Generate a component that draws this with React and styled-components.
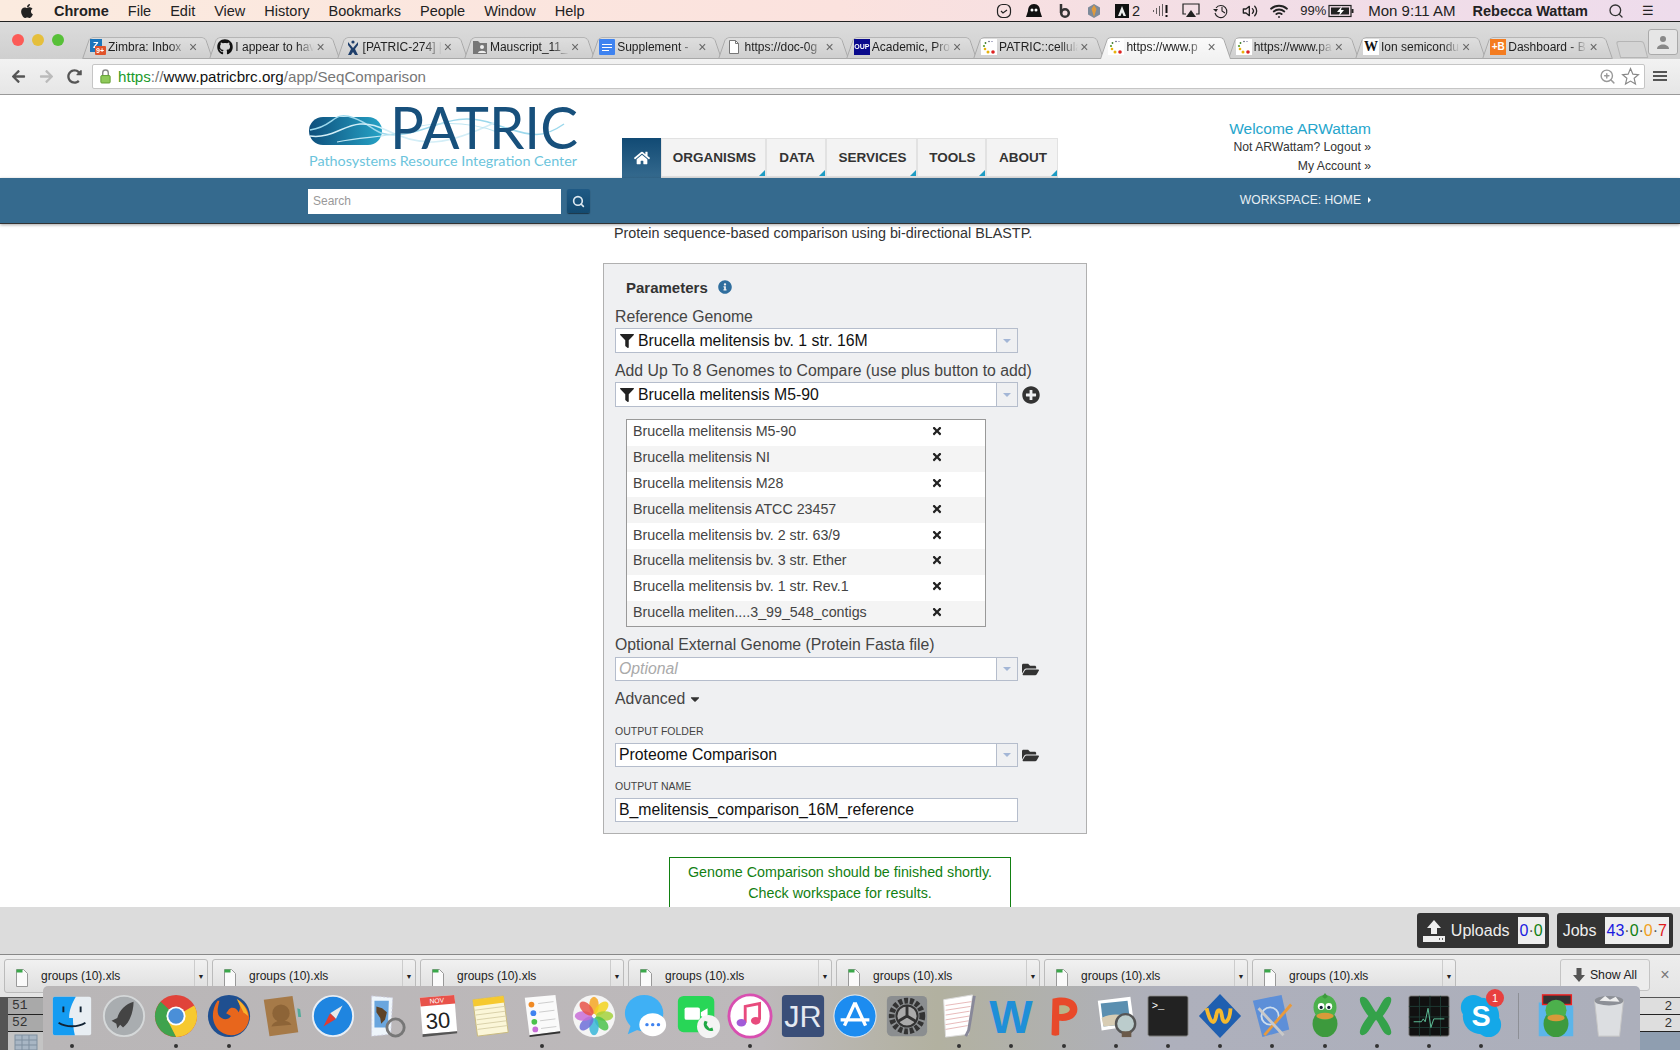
import React from "react";
import styled, { createGlobalStyle } from "styled-components";
import {
  FaApple,
  FaArrowLeft,
  FaArrowRight,
  FaCaretDown,
  FaFilter,
  FaFolderOpen,
  FaGithub,
  FaHome,
  FaInfoCircle,
  FaPlusCircle,
  FaRedoAlt,
  FaTimes,
} from "react-icons/fa";
import { FiSearch, FiVolume2, FiWifi, FiZoomIn } from "react-icons/fi";

const GlobalStyle = createGlobalStyle`
  html, body {
    margin: 0;
    padding: 0;
    background: #fff;
  }
  body {
    font-family: "Liberation Sans", Arial, sans-serif;
    color: #333;
  }
`;

const Screen = styled.div`
  position: relative;
  width: 1680px;
  height: 1050px;
  overflow: hidden;
  display: flex;
  flex-direction: column;
`;

/* mac menu bar */
const MenuBar = styled.div`
  height: 22px;
  flex: none;
  box-sizing: border-box;
  display: flex;
  align-items: center;
  padding: 0 26px 0 19px;
  font-size: 14.5px;
  color: #222;
  background: linear-gradient(90deg, #fbebdf 0%, #fbe2de 50%, #f2dde6 75%, #eedcec 100%);
  border-bottom: 1px solid #222;
`;
const MenuLeft = styled.div`
  display: flex;
  align-items: center;
  gap: 19px;
`;
const MenuRight = styled.div`
  margin-left: auto;
  display: flex;
  align-items: center;
  gap: 12px;
  font-size: 14.5px;
`;
const MenuBold = styled.span`
  font-weight: 700;
  margin-left: ${(p) => p.$ml || 0}px;
  margin-right: ${(p) => p.$mr || 0}px;
`;
const MenuSmall = styled.span`
  font-size: 13px;
  margin-left: ${(p) => p.$ml || 0}px;
`;
const MenuClock = styled.span`
  font-size: 15px;
`;
const MenuAdobe = styled.span`
  display: flex;
  align-items: center;
  gap: 3px;
`;
const BatteryWrap = styled.span`
  display: flex;
  margin: 0 2px 0 -10px;
`;

/* chrome tabs */
const TabStrip = styled.div`
  height: 37px;
  flex: none;
  display: flex;
  align-items: flex-end;
  padding-left: 84px;
  position: relative;
  background: linear-gradient(#dcdcdc, #cfcfcf);
`;
const Lights = styled.div`
  position: absolute;
  left: 12px;
  top: 12px;
  display: flex;
  gap: 8px;
`;
const Light = styled.span`
  width: 12px;
  height: 12px;
  border-radius: 50%;
  background: ${(p) => p.$color};
`;
const Tab = styled.div`
  position: relative;
  width: 127.3px;
  height: 25px;
  flex: none;
  display: flex;
  align-items: center;
  padding: 0 14px 0 6px;
  box-sizing: border-box;
  gap: 2px;
  font-size: 12px;
  color: #222;
  z-index: ${(p) => (p.$active ? 2 : 1)};
  &::before {
    content: "";
    position: absolute;
    inset: 0 -2px 0 -2px;
    border: 1px solid #a9a9a9;
    border-bottom: ${(p) => (p.$active ? "none" : "1px solid #a9a9a9")};
    border-radius: 4px 4px 0 0;
    background: ${(p) => (p.$active ? "linear-gradient(#fafafa, #f2f2f2)" : "linear-gradient(#dedede, #cfcfcf)")};
    transform: perspective(40px) rotateX(12deg);
    transform-origin: bottom;
  }
  & > * {
    position: relative;
  }
`;
const TabTitle = styled.span`
  flex: 1;
  overflow: hidden;
  white-space: nowrap;
  -webkit-mask-image: linear-gradient(90deg, #000 78%, transparent);
`;
const TabClose = styled.span`
  color: #666;
  font-size: 14px;
  line-height: 1;
`;
const NewTab = styled.div`
  width: 26px;
  height: 15px;
  margin-left: 6px;
  margin-bottom: 1px;
  flex: none;
  background: #d4d4d4;
  border: 1px solid #b5b5b5;
  border-radius: 3px 3px 0 0;
  transform: skewX(15deg);
`;
const Profile = styled.div`
  position: absolute;
  right: 2px;
  top: 7px;
  width: 30px;
  height: 26px;
  box-sizing: border-box;
  background: #e6e6e6;
  border: 1px solid #aaa;
  border-radius: 3px;
  display: flex;
  align-items: center;
  justify-content: center;
  color: #888;
`;
const Favicon = styled.span`
  width: 16px;
  height: 16px;
  flex: none;
  display: flex;
  align-items: center;
  justify-content: center;
  font-size: ${(p) => p.$size || 9}px;
  font-weight: 700;
  line-height: 1;
  color: ${(p) => p.$color || "#fff"};
  background: ${(p) => p.$bg || "transparent"};
  font-family: ${(p) => (p.$serif ? '"Liberation Serif", serif' : "inherit")};
`;

/* chrome toolbar */
const Toolbar = styled.div`
  height: 36px;
  flex: none;
  box-sizing: border-box;
  display: flex;
  align-items: center;
  padding: 0 7px 1px 4px;
  background: linear-gradient(#f2f2f2, #e6e6e6);
  border-bottom: 1px solid #999;
  position: relative;
`;
const NavBtn = styled.span`
  width: 28px;
  display: flex;
  justify-content: center;
  font-size: ${(p) => p.$size || 15}px;
  color: ${(p) => p.$color};
`;
const UrlBar = styled.div`
  width: 1553px;
  height: 25px;
  margin-left: 4px;
  box-sizing: border-box;
  display: flex;
  align-items: center;
  gap: 6px;
  padding: 1px 4px 0 6px;
  background: #fff;
  border: 1px solid #c5c5c5;
  border-radius: 2px;
  font-size: 15.15px;
  color: #777;
`;
const UrlGreen = styled.span`
  color: #1c9a2b;
`;
const UrlDark = styled.span`
  color: #111;
`;
const UrlTools = styled.span`
  margin-left: auto;
  display: flex;
  align-items: center;
  gap: 5px;
  color: #999;
  font-size: 17px;
`;
const HamburgerBox = styled.div`
  width: 14px;
  margin-left: 8px;
  display: flex;
  flex-direction: column;
  gap: 2px;
`;
const HamburgerLine = styled.span`
  height: 2px;
  background: #555;
`;

/* site header */
const SiteHeader = styled.div`
  height: 83px;
  flex: none;
  display: flex;
  padding: 0 309px 0 307px;
  background: #fff;
`;
const LogoBox = styled.svg`
  width: 272px;
  height: 70px;
  margin-top: 9px;
  flex: none;
`;
const Nav = styled.div`
  display: flex;
  align-self: flex-end;
  margin-left: 43px;
  height: 40px;
`;
const HomeItem = styled.div`
  width: 39px;
  display: flex;
  align-items: center;
  justify-content: center;
  color: #fff;
  font-size: 16px;
  background: linear-gradient(#114a74, #356a8e);
`;
const NavItem = styled.div`
  position: relative;
  width: ${(p) => p.$w}px;
  box-sizing: border-box;
  padding-left: 2px;
  display: flex;
  align-items: center;
  justify-content: center;
  font-size: 13.5px;
  font-weight: 700;
  color: #333;
  background: #f3f3f3;
  border: 1px solid #e2e2e2;
  border-bottom-width: 2px;
  &::after {
    content: "";
    position: absolute;
    right: 0;
    bottom: 0;
    border-style: solid;
    border-width: 0 0 6px 6px;
    border-color: transparent transparent #1d9cc4 transparent;
  }
`;
const UserBox = styled.div`
  margin-left: auto;
  padding-top: 24px;
  text-align: right;
  font-size: 12.2px;
  color: #333;
`;
const Welcome = styled.div`
  font-size: 15.5px;
  line-height: 19px;
  color: #26a5cc;
`;
const UserLink = styled.div`
  line-height: 19px;
`;

const BlueBar = styled.div`
  height: 46px;
  flex: none;
  box-sizing: border-box;
  display: flex;
  align-items: center;
  padding: 1px 309px 0 308px;
  background: #356a8e;
  border-bottom: 1px solid #333;
  box-shadow: 0 1px 3px rgba(0, 0, 0, 0.35);
  position: relative;
  z-index: 2;
`;
const SearchInput = styled.div`
  width: 253px;
  height: 25px;
  box-sizing: border-box;
  padding: 0 5px;
  display: flex;
  align-items: center;
  background: #fff;
  color: #999;
  font-size: 12px;
`;
const SearchBtn = styled.div`
  width: 23px;
  height: 24px;
  margin-left: 6px;
  display: flex;
  align-items: center;
  justify-content: center;
  color: #dfeaf2;
  font-size: 13px;
  border-radius: 2px;
  background: linear-gradient(#1f5a85, #134a70);
  box-shadow: 0 1px 1px rgba(0, 0, 0, 0.5);
`;
const WorkspaceLink = styled.div`
  margin-left: auto;
  margin-top: -2px;
  display: flex;
  align-items: center;
  gap: 7px;
  font-size: 12.15px;
  color: #e8eff4;
`;
const SmallCaret = styled.span`
  border-style: solid;
  border-width: 3px 0 3px 3.5px;
  border-color: transparent transparent transparent #fff;
`;

/* page body */
const Main = styled.div`
  height: 683px;
  flex: none;
  overflow: hidden;
  display: flex;
  flex-direction: column;
  background: #fff;
`;
const Description = styled.div`
  margin: 0 0 0 614px;
  font-size: 14.35px;
  line-height: 18px;
  color: #333;
`;
const Panel = styled.div`
  width: 484px;
  height: 571px;
  flex: none;
  box-sizing: border-box;
  margin: 21px 0 0 603px;
  padding: 13px 11px 0;
  background: #eff0f2;
  border: 1px solid #b0b0b0;
  display: flex;
  flex-direction: column;
`;
const PanelHead = styled.div`
  display: flex;
  align-items: center;
  gap: 10px;
  height: 20px;
  padding-left: 11px;
  margin-bottom: 11px;
  font-size: 15px;
  font-weight: 700;
  color: #333;
`;
const InfoIcon = styled(FaInfoCircle)`
  color: #2f6e9e;
  font-size: 14px;
`;
const FieldLabel = styled.div`
  font-size: 15.8px;
  line-height: 18px;
  margin-bottom: ${(p) => p.$mb ?? 2}px;
  color: #444;
`;
const CapsLabel = styled.div`
  font-size: 10.5px;
  line-height: 13px;
  margin-bottom: 5px;
  color: #444;
`;
const FieldRow = styled.div`
  display: flex;
  align-items: center;
  gap: 4px;
  margin-bottom: ${(p) => p.$mb || 0}px;
`;
const Combo = styled.div`
  width: 403px;
  height: ${(p) => p.$h || 24}px;
  box-sizing: border-box;
  flex: none;
  display: flex;
  align-items: stretch;
  background: #fff;
  border: 1px solid #b5bdcc;
`;
const ComboValue = styled.div`
  flex: 1;
  display: flex;
  align-items: center;
  gap: 4px;
  padding-left: 3px;
  font-size: 15.8px;
  color: #111;
  white-space: nowrap;
  overflow: hidden;
`;
const Placeholder = styled.span`
  font-style: italic;
  color: #aaa;
`;
const FilterIcon = styled(FaFilter)`
  font-size: 14px;
  color: #222;
  margin-left: 1px;
`;
const ComboArrow = styled.div`
  width: 20px;
  flex: none;
  display: flex;
  align-items: center;
  justify-content: center;
  background: #eff0f2;
  border-left: 1px solid #b5bdcc;
  &::after {
    content: "";
    border-style: solid;
    border-width: 4px 4px 0 4px;
    border-color: #a3b6d6 transparent transparent transparent;
  }
`;
const GenomeList = styled.div`
  width: 360px;
  box-sizing: border-box;
  margin: 12px 0 9px 11px;
  border: 1px solid #999;
  background: #fff;
`;
const GenomeRow = styled.div`
  height: 25.8px;
  box-sizing: border-box;
  padding: 0 0 3px 6px;
  display: flex;
  align-items: center;
  font-size: 14.25px;
  color: #444;
  background: ${(p) => (p.$odd ? "#f4f4f4" : "#fff")};
`;
const GenomeName = styled.span`
  width: 298px;
  flex: none;
  white-space: nowrap;
`;
const RemoveIcon = styled(FaTimes)`
  font-size: 12px;
  color: #222;
`;
const AdvancedToggle = styled.div`
  display: flex;
  align-items: center;
  gap: 3px;
  height: 20px;
  margin: 8px 0 16px;
  font-size: 15.8px;
  color: #444;
`;
const TextBox = styled.div`
  width: 403px;
  height: 24px;
  box-sizing: border-box;
  display: flex;
  align-items: center;
  padding-left: 3px;
  font-size: 15.8px;
  color: #111;
  background: #fff;
  border: 1px solid #b5bdcc;
`;
const Message = styled.div`
  width: 342px;
  height: 70px;
  flex: none;
  box-sizing: border-box;
  margin: 23px 0 0 669px;
  padding-top: 4px;
  border: 1px solid #128012;
  text-align: center;
  font-size: 14.3px;
  line-height: 21px;
  color: #128012;
  background: #fff;
`;

/* jobs footer */
const Footer = styled.div`
  height: 47px;
  flex: none;
  display: flex;
  align-items: flex-start;
  justify-content: flex-end;
  gap: 8px;
  padding: 6px 7px 0 0;
  box-sizing: border-box;
  background: #dcdcdc;
`;
const StatusPill = styled.div`
  height: 35px;
  box-sizing: border-box;
  display: flex;
  align-items: center;
  gap: 5px;
  padding: 0 4px 0 ${(p) => p.$pl}px;
  border-radius: 3px;
  background: #333;
  color: #eee;
  font-size: 16px;
`;
const Counts = styled.span`
  background: #eee;
  height: 27px;
  display: flex;
  align-items: center;
  padding: 0 2px;
  margin-left: 3px;
  font-size: 16px;
`;
const Count = styled.span`
  color: ${(p) => p.$color};
`;

/* chrome download shelf */
const DownloadBar = styled.div`
  height: 43px;
  flex: none;
  box-sizing: border-box;
  display: flex;
  align-items: flex-start;
  gap: 4px;
  padding: 4px 0 0 4px;
  background: linear-gradient(#ededed, #e4e4e4);
  border-top: 1px solid #888;
`;
const DownloadItem = styled.div`
  width: 204px;
  height: 34px;
  flex: none;
  box-sizing: border-box;
  display: flex;
  align-items: flex-start;
  padding-top: 8px;
  font-size: 12px;
  color: #222;
  background: linear-gradient(#f1f1f1, #dedede);
  border: 1px solid #bbb;
  border-radius: 3px;
`;
const FileIcon = styled.svg`
  width: 16px;
  height: 20px;
  margin: 0 11px 0 9px;
  flex: none;
`;
const DownloadName = styled.span`
  flex: 1;
  line-height: 16px;
`;
const DownloadCaret = styled.span`
  width: 13px;
  height: 32px;
  margin-top: -8px;
  flex: none;
  box-sizing: border-box;
  display: flex;
  align-items: center;
  justify-content: center;
  border-left: 1px solid #ccc;
  font-size: 7px;
`;
const ShowAll = styled.div`
  width: 90px;
  height: 32px;
  margin-left: auto;
  flex: none;
  box-sizing: border-box;
  display: flex;
  align-items: center;
  justify-content: center;
  gap: 5px;
  font-size: 12.3px;
  color: #222;
  background: #ececec;
  border: 1px solid #c4c4c4;
  border-radius: 3px;
`;
const ShelfClose = styled.span`
  width: 30px;
  height: 32px;
  margin-left: -4px;
  flex: none;
  display: flex;
  align-items: center;
  justify-content: center;
  font-size: 16px;
  color: #777;
`;

/* behind the dock */
const DesktopStrip = styled.div`
  height: 53px;
  flex: none;
  box-sizing: border-box;
  padding-top: 1px;
  display: flex;
  justify-content: space-between;
  background: #555;
`;
const SheetPiece = styled.div`
  width: ${(p) => p.$w}px;
  box-sizing: border-box;
  padding-left: ${(p) => p.$pl || 0}px;
  font-size: 13px;
  color: #333;
  overflow: hidden;
`;
const SheetCell = styled.div`
  height: 17px;
  box-sizing: border-box;
  display: flex;
  justify-content: ${(p) => p.$justify || "flex-start"};
  gap: 8px;
  line-height: 16px;
  padding: 0 8px 0 4px;
  font-family: ${(p) => (p.$mono ? '"Liberation Mono", monospace' : "inherit")};
  background: ${(p) => p.$bg};
  border-bottom: 1px solid #222;
`;
const SheetFoot = styled.div`
  height: 18px;
  box-sizing: border-box;
  padding-left: 4px;
  background: ${(p) => p.$bg};
`;

/* dock */
const Dock = styled.div`
  position: absolute;
  left: 43px;
  bottom: 0;
  width: 1597px;
  height: 64px;
  box-sizing: border-box;
  padding: 7px 0 0 6px;
  display: flex;
  align-items: flex-start;
  gap: 6.2px;
  background: linear-gradient(90deg, #b9b6b7 0%, #bdb9bb 45%, #b2b1a0 56%, #aeb0bc 70%, #acafbb 100%);
  border-radius: 5px 5px 0 0;
`;
const DockSlot = styled.div`
  position: relative;
  width: 46px;
  height: 46px;
  flex: none;
  &::after {
    content: "";
    display: ${(p) => (p.$running ? "block" : "none")};
    position: absolute;
    left: 21px;
    bottom: -9px;
    width: 4px;
    height: 4px;
    border-radius: 50%;
    background: #333;
  }
`;
const DockSep = styled.div`
  width: 1px;
  height: 46px;
  margin: 0 8px;
  flex: none;
  background: #8d8f96;
`;
const Badge = styled.span`
  position: absolute;
  top: -4px;
  right: 0;
  width: 18px;
  height: 18px;
  border-radius: 50%;
  background: #e8403f;
  color: #fff;
  font-size: 11px;
  display: flex;
  align-items: center;
  justify-content: center;
`;

const Ico = ({ children }) => (
  <svg viewBox="0 0 48 48" width="46" height="46">
    {children}
  </svg>
);

const Glyph = ({ w = 18, h = 16, vb = "0 0 18 16", children }) => (
  <svg viewBox={vb} width={w} height={h}>
    {children}
  </svg>
);

const PatricDots = () => (
  <svg viewBox="0 0 16 16" width="16" height="16">
    <rect width="16" height="16" fill="#fff" />
    <circle cx="12" cy="13" r="1.8" fill="#d22" />
    <circle cx="7" cy="13" r="1.5" fill="#e8b20c" />
    <circle cx="4" cy="10" r="1.3" fill="#e8b20c" />
    <circle cx="3" cy="7" r="1.1" fill="#5a9a2a" />
    <circle cx="4.5" cy="4" r="0.9" fill="#3d7a2a" />
    <circle cx="8" cy="2.5" r="0.7" fill="#335" />
    <circle cx="11" cy="2.5" r="0.6" fill="#558" />
  </svg>
);

const tabs = [
  {
    title: "Zimbra: Inbox",
    icon: (
      <svg viewBox="0 0 16 16" width="16" height="16">
        <rect width="12" height="13" fill="#1b75bb" />
        <text x="3" y="9" fontSize="9" fontWeight="700" fill="#fff" fontFamily="Liberation Sans">Z</text>
        <rect x="5" y="7" width="11" height="9" rx="1" fill="#e0532a" />
        <text x="6" y="14" fontSize="7" fontWeight="700" fill="#fff" fontFamily="Liberation Sans">9+</text>
      </svg>
    ),
  },
  { title: "I appear to hav", icon: <Favicon $color="#111" $size={16}><FaGithub /></Favicon> },
  {
    title: "[PATRIC-274] |",
    icon: (
      <svg viewBox="0 0 16 16" width="16" height="16">
        <circle cx="8" cy="3" r="1.6" fill="#1f3f6b" />
        <path d="M3 3l5 6 5-6v3l-3 4 3 6h-3l-2-3-2 3H3l3-6-3-4z" fill="#1f3f6b" />
      </svg>
    ),
  },
  {
    title: "Mauscript_11_",
    icon: (
      <svg viewBox="0 0 16 16" width="16" height="16">
        <path d="M1 2h5l2 2h7v11H1z" fill="#777" />
        <circle cx="10" cy="8" r="2" fill="#eee" />
        <path d="M6 14c0-3 8-3 8 0z" fill="#eee" />
      </svg>
    ),
  },
  {
    title: "Supplement -",
    icon: (
      <svg viewBox="0 0 16 16" width="16" height="16">
        <rect width="16" height="16" rx="1" fill="#3f83f0" />
        <path d="M3 5h10v1H3zM3 8h10v1H3zM3 11h7v1H3z" fill="#fff" />
      </svg>
    ),
  },
  {
    title: "https://doc-0g",
    icon: (
      <svg viewBox="0 0 16 16" width="16" height="16">
        <path d="M3.5 1.5h6l3 3v10h-9z" fill="#fff" stroke="#777" />
        <path d="M9.5 1.5v3h3" fill="none" stroke="#777" />
      </svg>
    ),
  },
  { title: "Academic, Pro", icon: <Favicon $bg="#0a0a8c" $size={7}>OUP</Favicon> },
  { title: "PATRIC::cellula", icon: <PatricDots /> },
  { title: "https://www.p", icon: <PatricDots />, active: true },
  { title: "https://www.pa", icon: <PatricDots /> },
  { title: "Ion semicondu", icon: <Favicon $bg="#fff" $color="#111" $size={14} $serif>W</Favicon> },
  { title: "Dashboard - B", icon: <Favicon $bg="#f47c20" $size={10}>+B</Favicon> },
];

const navItems = [
  { label: "ORGANISMS", w: 105 },
  { label: "DATA", w: 60 },
  { label: "SERVICES", w: 91 },
  { label: "TOOLS", w: 69 },
  { label: "ABOUT", w: 72 },
];

const genomes = [
  "Brucella melitensis M5-90",
  "Brucella melitensis NI",
  "Brucella melitensis M28",
  "Brucella melitensis ATCC 23457",
  "Brucella melitensis bv. 2 str. 63/9",
  "Brucella melitensis bv. 3 str. Ether",
  "Brucella melitensis bv. 1 str. Rev.1",
  "Brucella meliten....3_99_548_contigs",
];

const dockIcons = [
  {
    running: true,
    art: (
      <Ico>
        <rect x="4" y="4" width="40" height="40" rx="2" fill="#e8eef3" />
        <path d="M6 4h22c-4 7-7 14-7 22h4c0 6 .5 12 2 18H6a2 2 0 0 1-2-2V6a2 2 0 0 1 2-2z" fill="#149cf2" />
        <path d="M15 14v6M33 14v6" stroke="#123" strokeWidth="2" />
        <path d="M10 31c8 5 20 5 28 0" stroke="#123" strokeWidth="2" fill="none" />
      </Ico>
    ),
  },
  {
    art: (
      <Ico>
        <circle cx="24" cy="24" r="21" fill="#a9adb0" stroke="#d5d8d9" strokeWidth="2" />
        <path d="M34 9c-8 2-15 9-17 17l-6 3 5 3 1 5 3-4 3 3c7-5 11-17 11-27z" fill="#444" />
      </Ico>
    ),
  },
  {
    running: true,
    art: (
      <Ico>
        <circle cx="24" cy="24" r="22" fill="#e0433a" />
        <path d="M24 24L5 35A22 22 0 0 1 8 9z" fill="#3fa34d" />
        <path d="M24 24l19-11A22 22 0 0 1 24 46L14 28z" fill="#f6c92f" />
        <path d="M5 35l10-7 9 18A22 22 0 0 1 5 35z" fill="#3fa34d" />
        <circle cx="24" cy="24" r="10" fill="#fff" />
        <circle cx="24" cy="24" r="8" fill="#4a8fd8" />
      </Ico>
    ),
  },
  {
    running: true,
    art: (
      <Ico>
        <circle cx="24" cy="24" r="22" fill="#1f4f90" />
        <path d="M12 8c-8 12-6 28 6 34 12 6 26-2 27-16 0-8-5-15-12-19 3 6 3 10 1 13-2-5-8-6-10-3l-3 4 5 3c-3 5-10 4-13-1-2-5 0-10 1-15z" fill="#e8661c" />
        <path d="M32 6c6 4 11 11 12 18l-5-4z" fill="#f6b32d" />
      </Ico>
    ),
  },
  {
    art: (
      <Ico>
        <path d="M6 7l30-4 6 38-30 4z" fill="#a67a48" />
        <circle cx="24" cy="21" r="9" fill="#8d6437" />
        <path d="M14 35c3-8 17-8 21-2z" fill="#8d6437" />
        <path d="M41 16l3 1 1 8-3 0z" fill="#5a9" />
      </Ico>
    ),
  },
  {
    art: (
      <Ico>
        <circle cx="24" cy="24" r="21" fill="#1f85e0" stroke="#e8eef5" strokeWidth="2" />
        <path d="M34 13L21 21l6 6z" fill="#e8e8e8" />
        <path d="M14 35l7-14 6 6z" fill="#e23c30" />
      </Ico>
    ),
  },
  {
    art: (
      <Ico>
        <path d="M10 3l22 2-2 38-20 2z" fill="#eef5fb" stroke="#ccd" strokeDasharray="2 2" />
        <path d="M13 8h15l-1 28H13z" fill="#6aa6de" />
        <path d="M15 14l6 2 5 4-2 8-4 4-1-6-4-6z" fill="#5e4327" />
        <circle cx="35" cy="36" r="9" fill="none" stroke="#777" strokeWidth="3" />
      </Ico>
    ),
  },
  {
    art: (
      <Ico>
        <path d="M6 5l36-3 3 38-36 3z" fill="#fff" />
        <path d="M6 5l36-3 1 9-36 3z" fill="#e8524a" />
        <path d="M9 43l36-3v2l-36 4z" fill="#555" />
        <text x="24" y="10.5" fontSize="7" fill="#fff" textAnchor="middle" fontFamily="Liberation Sans" transform="rotate(-4 24 10)">NOV</text>
        <text x="25" y="37" fontSize="23" fill="#222" textAnchor="middle" fontFamily="Liberation Sans" transform="rotate(-4 24 30)">30</text>
      </Ico>
    ),
  },
  {
    art: (
      <Ico>
        <path d="M6 7l32-4 5 38-32 4z" fill="#fbf6d8" stroke="#c9b97b" />
        <path d="M6 7l32-4 1 7-32 4z" fill="#f6c92f" />
        <path d="M8 18l31-4M9 23l31-4M10 28l31-4M10 33l31-4M11 38l31-4" stroke="#d8d0a8" />
      </Ico>
    ),
  },
  {
    running: true,
    art: (
      <Ico>
        <path d="M6 5l32-3 5 38-32 4z" fill="#fafafa" />
        <path d="M11 44l32-4v2l-32 4z" fill="#333" />
        <circle cx="13" cy="12" r="3" fill="#f08a24" />
        <circle cx="15" cy="21" r="3" fill="#3f83f0" />
        <circle cx="16" cy="30" r="3" fill="#4bc24b" />
        <circle cx="17" cy="38" r="3" fill="#c86dd7" />
        <path d="M20 11l16-2M21 20l16-2M22 29l16-2M23 37l16-2" stroke="#ccc" />
      </Ico>
    ),
  },
  {
    art: (
      <Ico>
        <circle cx="24" cy="24" r="22" fill="#f4f4f4" />
        <g fillOpacity="0.85">
          <ellipse cx="24" cy="13" rx="5" ry="9" fill="#f5a623" />
          <ellipse cx="24" cy="13" rx="5" ry="9" fill="#f2d21f" transform="rotate(45 24 24)" />
          <ellipse cx="24" cy="13" rx="5" ry="9" fill="#a3d13c" transform="rotate(90 24 24)" />
          <ellipse cx="24" cy="13" rx="5" ry="9" fill="#4bc24b" transform="rotate(135 24 24)" />
          <ellipse cx="24" cy="13" rx="5" ry="9" fill="#38b6d8" transform="rotate(180 24 24)" />
          <ellipse cx="24" cy="13" rx="5" ry="9" fill="#6d6fd8" transform="rotate(225 24 24)" />
          <ellipse cx="24" cy="13" rx="5" ry="9" fill="#c86dd7" transform="rotate(270 24 24)" />
          <ellipse cx="24" cy="13" rx="5" ry="9" fill="#e8524a" transform="rotate(315 24 24)" />
        </g>
      </Ico>
    ),
  },
  {
    art: (
      <Ico>
        <ellipse cx="22" cy="21" rx="20" ry="19" fill="#3fb0f5" />
        <path d="M8 34l-3 9 11-5z" fill="#3fb0f5" />
        <ellipse cx="31" cy="33" rx="14" ry="12" fill="#fff" />
        <circle cx="25" cy="33" r="1.8" fill="#3f83f0" />
        <circle cx="31" cy="33" r="1.8" fill="#3f83f0" />
        <circle cx="37" cy="33" r="1.8" fill="#3f83f0" />
      </Ico>
    ),
  },
  {
    art: (
      <Ico>
        <rect x="3" y="3" width="38" height="38" rx="6" fill="#28d657" />
        <rect x="10" y="15" width="16" height="13" rx="2" fill="#fff" />
        <path d="M27 20l7-4v12l-7-4z" fill="#fff" />
        <circle cx="35" cy="35" r="12" fill="#f4f4f4" />
        <path d="M31 29l3 1-1 3 3 4 3-1 1 3c-5 3-13-4-9-10z" fill="#20a845" />
      </Ico>
    ),
  },
  {
    running: true,
    art: (
      <Ico>
        <circle cx="24" cy="24" r="22" fill="#fff" stroke="#d84fb0" strokeWidth="3" />
        <path d="M19 31V14l15-3v17" stroke="#e84b7d" strokeWidth="3" fill="none" />
        <ellipse cx="15" cy="31" rx="5" ry="4" fill="#a25cd8" />
        <ellipse cx="30" cy="29" rx="5" ry="4" fill="#e84b7d" />
      </Ico>
    ),
  },
  {
    art: (
      <Ico>
        <rect x="2" y="2" width="44" height="44" rx="4" fill="#3a4e78" />
        <text x="24" y="36" fontSize="32" fill="#e4e9f2" textAnchor="middle" fontFamily="Liberation Sans">JR</text>
      </Ico>
    ),
  },
  {
    art: (
      <Ico>
        <circle cx="24" cy="24" r="22" fill="#1c8cf0" stroke="#e8eef5" />
        <path d="M24 10L13 34M24 10l11 24M9 28h30" stroke="#fff" strokeWidth="3.5" fill="none" />
      </Ico>
    ),
  },
  {
    art: (
      <Ico>
        <rect x="3" y="3" width="42" height="42" rx="5" fill="#8b8e90" />
        <circle cx="24" cy="24" r="16" fill="none" stroke="#333" strokeWidth="6" strokeDasharray="4 2" />
        <circle cx="24" cy="24" r="11" fill="#aaa" stroke="#333" strokeWidth="2" />
        <path d="M24 24V13M24 24l-10 6M24 24l10 6" stroke="#333" strokeWidth="3" />
      </Ico>
    ),
  },
  {
    running: true,
    art: (
      <Ico>
        <path d="M8 7l30-5-4 41-24 3z" fill="#fff" stroke="#ddd" />
        <path d="M10 13l27-4M10 18l26-4M10 23l25-4M10 28l25-4M10 33l24-4M10 38l23-4" stroke="#d99" strokeWidth="0.7" />
        <path d="M40 3l-6 36-3 6" stroke="#889" strokeWidth="3" fill="none" />
      </Ico>
    ),
  },
  {
    running: true,
    art: (
      <Ico>
        <text x="24" y="42" fontSize="48" fontWeight="700" fill="#1f8fd8" textAnchor="middle" fontFamily="Liberation Sans">W</text>
      </Ico>
    ),
  },
  {
    running: true,
    art: (
      <Ico>
        <path d="M12 6c16-4 26 2 26 11 0 9-9 13-19 12v14c0 2-8 2-8 0z" fill="#e8492a" />
        <path d="M19 13c7-1 11 1 11 4s-4 5-11 5z" fill="#b8b58a" />
      </Ico>
    ),
  },
  {
    running: true,
    art: (
      <Ico>
        <path d="M5 8l34-4 4 30-34 5z" fill="#fff" />
        <path d="M8 11l28-3 3 24-28 3z" fill="#5b8fb0" />
        <path d="M9 26c10-5 20-4 29-1l1 7-28 3z" fill="#d8cdb4" />
        <circle cx="34" cy="32" r="10" fill="#bcc" stroke="#555" strokeWidth="2.5" />
        <rect x="30" y="40" width="10" height="6" fill="#6b5a4a" />
      </Ico>
    ),
  },
  {
    running: true,
    art: (
      <Ico>
        <rect x="3" y="3" width="42" height="42" rx="2" fill="#222" stroke="#999" />
        <text x="7" y="17" fontSize="11" fill="#fff" fontFamily="Liberation Mono">&gt;_</text>
      </Ico>
    ),
  },
  {
    running: true,
    art: (
      <Ico>
        <path d="M24 1l22 23-22 23L2 24z" fill="#1f5fb0" />
        <path d="M10 16c4 16 8 18 10 8 1-8 5-8 6 0 1 10 8 8 9-8" stroke="#f5b92f" strokeWidth="4" fill="none" />
      </Ico>
    ),
  },
  {
    running: true,
    art: (
      <Ico>
        <path d="M4 8l30-6 8 36-28 8z" fill="#5d8fd8" />
        <circle cx="22" cy="24" r="9" fill="none" stroke="#cde" strokeWidth="2" />
        <path d="M44 12L16 44" stroke="#e89a3c" strokeWidth="3" />
        <path d="M10 16l26 28" stroke="#c9c9c9" strokeWidth="3" />
      </Ico>
    ),
  },
  {
    running: true,
    art: (
      <Ico>
        <ellipse cx="24" cy="32" rx="13" ry="14" fill="#3d9a3d" />
        <ellipse cx="24" cy="15" rx="12" ry="13" fill="#4cb04c" />
        <path d="M24 0l3 4-3 2-3-2z" fill="#3d9a3d" />
        <circle cx="20" cy="14" r="3.5" fill="#fff" />
        <circle cx="28" cy="14" r="3.5" fill="#fff" />
        <circle cx="20" cy="15" r="1.7" fill="#123" />
        <circle cx="28" cy="15" r="1.7" fill="#123" />
        <ellipse cx="24" cy="24" rx="9" ry="3.5" fill="#d89a3a" />
      </Ico>
    ),
  },
  {
    running: true,
    art: (
      <Ico>
        <path d="M9 4c6 0 10 12 14 16 4-4 7-16 13-16 6 0 2 10-6 20 8 10 12 20 6 20-6 0-9-12-13-16-4 4-8 16-14 16s-2-10 6-20C7 14 3 4 9 4z" fill="#34a24a" />
      </Ico>
    ),
  },
  {
    running: true,
    art: (
      <Ico>
        <rect x="3" y="3" width="42" height="42" rx="2" fill="#111" stroke="#888" />
        <path d="M3 14h42M3 25h42M3 36h42M14 3v42M25 3v42M36 3v42" stroke="#1d3a33" />
        <path d="M8 30h8l2-3 2 3 3-14 3 20 3-9h11" stroke="#5fc29b" fill="none" />
      </Ico>
    ),
  },
  {
    running: true,
    badge: "1",
    art: (
      <Ico>
        <circle cx="16" cy="15" r="13" fill="#14a8e8" />
        <circle cx="32" cy="33" r="13" fill="#14a8e8" />
        <circle cx="24" cy="24" r="19" fill="#14a8e8" />
        <text x="24" y="34" fontSize="30" fontWeight="700" fill="#fff" textAnchor="middle" fontFamily="Liberation Sans">S</text>
      </Ico>
    ),
  },
];

const dockExtras = [
  <Ico key="duckfolder">
    <path d="M6 10h13l3 3h20v32H6z" fill="#5bb5ea" />
    <rect x="10" y="2" width="30" height="10" fill="#333" stroke="#e22" strokeWidth="1.5" />
    <ellipse cx="24" cy="32" rx="13" ry="14" fill="#3d9a3d" />
    <ellipse cx="24" cy="18" rx="11" ry="11" fill="#4cb04c" />
    <ellipse cx="24" cy="26" rx="9" ry="3.5" fill="#d89a3a" />
  </Ico>,
  <Ico key="trash">
    <path d="M9 8h30l-4 37H13z" fill="#e4e6e8" fillOpacity="0.85" stroke="#c5c5c5" />
    <ellipse cx="24" cy="8" rx="15" ry="5" fill="#8d9097" />
    <path d="M14 8l6-5 5 4 6-3 4 5z" fill="#eee" />
  </Ico>,
];

export default function App() {
  return (
    <Screen>
      <GlobalStyle />

      {/* Menu bar */}
      <MenuBar>
        <MenuLeft>
          <FaApple size={16} />
          <MenuBold>Chrome</MenuBold>
          <span>File</span>
          <span>Edit</span>
          <span>View</span>
          <span>History</span>
          <span>Bookmarks</span>
          <span>People</span>
          <span>Window</span>
          <span>Help</span>
        </MenuLeft>
        <MenuRight>
          <Glyph>
            <rect x="2.5" y="1.5" width="13" height="13" rx="5" fill="none" stroke="#222" strokeWidth="1.2" />
            <path d="M6 8l2 2 4-3" fill="none" stroke="#222" strokeWidth="1.2" />
          </Glyph>
          <Glyph>
            <path d="M9 1c4 0 6 3 6 7l2 6H1l2-6c0-4 2-7 6-7z" fill="#111" />
            <circle cx="7" cy="7" r="1.5" fill="#fff" />
            <circle cx="11" cy="7" r="1.5" fill="#fff" />
          </Glyph>
          <Glyph>
            <path d="M6 1v9" stroke="#333" strokeWidth="2.5" />
            <circle cx="10" cy="10" r="3.8" fill="none" stroke="#333" strokeWidth="2.5" />
          </Glyph>
          <Glyph>
            <path d="M9 1l6 3.5v7L9 15l-6-3.5v-7z" fill="#7d8a9a" />
            <path d="M9 2l2.5 4L9 14 6.5 6z" fill="#e09a3c" />
          </Glyph>
          <MenuAdobe>
            <Glyph w={14} h={14} vb="0 0 14 14">
              <rect width="14" height="14" fill="#111" />
              <path d="M7 2l4 10H8.5L7 8.5 5.5 12H3z" fill="#eee" />
            </Glyph>
            2
          </MenuAdobe>
          <Glyph>
            <path d="M1 8h1M4 6h1M4 8h1M4 10h1M7 4h1M7 6h1M7 8h1M7 10h1M7 12h1M10 2h1M10 4h1M10 6h1M10 8h1M10 10h1M10 12h1" stroke="#333" strokeWidth="1.5" />
            <path d="M14.5 2v8M14.5 12v2" stroke="#111" strokeWidth="2" />
          </Glyph>
          <Glyph>
            <path d="M4 11H1V1h16v10h-3" fill="none" stroke="#222" strokeWidth="1.2" />
            <path d="M9 7l5 7H4z" fill="#222" />
          </Glyph>
          <Glyph>
            <path d="M4 5a6 6 0 1 1-1 5" fill="none" stroke="#222" strokeWidth="1.1" />
            <path d="M1 6l3 3 2-3z" fill="#222" />
            <path d="M10 4v4l3 2" fill="none" stroke="#222" strokeWidth="1.1" />
          </Glyph>
          <FiVolume2 size={16} color="#222" />
          <FiWifi size={18} color="#222" strokeWidth={2.5} />
          <MenuSmall>99%</MenuSmall>
          <BatteryWrap>
            <Glyph w={26} h={14} vb="0 0 26 14">
              <rect x="1" y="1.5" width="22" height="11" fill="none" stroke="#222" strokeWidth="1.2" />
              <rect x="3" y="3.5" width="18" height="7" fill="#222" />
              <path d="M14 2l-5 6h3l-1 4 5-6h-3z" fill="#fff" />
              <rect x="23.5" y="5" width="2" height="4" fill="#222" />
            </Glyph>
          </BatteryWrap>
          <MenuClock>Mon 9:11 AM</MenuClock>
          <MenuBold $ml={5} $mr={8}>Rebecca Wattam</MenuBold>
          <FiSearch size={16} color="#333" />
          <MenuSmall $ml={6}>☰</MenuSmall>
        </MenuRight>
      </MenuBar>

      {/* Tabs */}
      <TabStrip>
        <Lights>
          <Light $color="#fc5b57" />
          <Light $color="#e5bf3c" />
          <Light $color="#57c038" />
        </Lights>
        {tabs.map((t) => (
          <Tab key={t.title} $active={t.active}>
            {t.icon}
            <TabTitle>{t.title}</TabTitle>
            <TabClose>×</TabClose>
          </Tab>
        ))}
        <NewTab />
        <Profile>
          <svg viewBox="0 0 16 16" width="16" height="16">
            <circle cx="8" cy="5" r="3" fill="#888" />
            <path d="M2 15c0-6 12-6 12 0z" fill="#888" />
          </svg>
        </Profile>
      </TabStrip>

      {/* Address bar */}
      <Toolbar>
        <NavBtn $color="#555"><FaArrowLeft /></NavBtn>
        <NavBtn $color="#bbb"><FaArrowRight /></NavBtn>
        <NavBtn $color="#555"><FaRedoAlt /></NavBtn>
        <UrlBar>
          <svg viewBox="0 0 14 16" width="13" height="15">
            <path d="M4 7V4a3 3 0 0 1 6 0v3" fill="none" stroke="#888" strokeWidth="1.5" />
            <rect x="2" y="7" width="10" height="8" rx="1" fill="#8fc95a" stroke="#5d9a2d" />
          </svg>
          <span>
            <UrlGreen>https</UrlGreen>://<UrlDark>www.patricbrc.org</UrlDark>/app/SeqComparison
          </span>
          <UrlTools>
            <FiZoomIn />
            <svg viewBox="0 0 24 24" width="19" height="19">
              <path d="M12 2l3 7 7 .6-5.400 4.700 1.700 7.200L12 17.800 5.700 21.500l1.700-7.200L2 9.600 9 9z" fill="#fff" stroke="#888" strokeWidth="1.5" />
            </svg>
          </UrlTools>
        </UrlBar>
        <HamburgerBox>
          <HamburgerLine />
          <HamburgerLine />
          <HamburgerLine />
        </HamburgerBox>
      </Toolbar>

      {/* Site header */}
      <SiteHeader>
        <LogoBox viewBox="0 0 272 70">
          <defs>
            <linearGradient id="pill" x1="0" x2="1" y1="0" y2="0">
              <stop offset="0" stopColor="#0e4f7c" />
              <stop offset="1" stopColor="#26a3c6" />
            </linearGradient>
          </defs>
          <rect x="2" y="13" width="73" height="28" rx="14" fill="url(#pill)" />
          <path d="M3 26c26-4 22-20 44-12s20 20 50 16 50-24 90-10 50 14 70 0" stroke="#9cd8ec" strokeWidth="1.5" fill="none" />
          <path d="M3 32c30 4 40-24 76-6s60 16 110-8" stroke="#d3eef7" strokeWidth="1.5" fill="none" />
          <path d="M30 38c30-6 50-4 70-12s60-10 90 2" stroke="#bfe6f2" strokeWidth="1.2" fill="none" />
          <text x="83" y="45" fontSize="59" fontFamily="Lato, sans-serif" fontWeight="400" fill="#17507c" textLength="188" lengthAdjust="spacingAndGlyphs">
            PATRIC
          </text>
          <text x="2" y="62" fontSize="14" fontFamily="Lato, sans-serif" fontWeight="400" fill="#6cc4dc" textLength="268" lengthAdjust="spacingAndGlyphs">
            Pathosystems Resource Integration Center
          </text>
        </LogoBox>
        <Nav>
          <HomeItem>
            <FaHome />
          </HomeItem>
          {navItems.map((n) => (
            <NavItem key={n.label} $w={n.w}>{n.label}</NavItem>
          ))}
        </Nav>
        <UserBox>
          <Welcome>Welcome ARWattam</Welcome>
          <UserLink>Not ARWattam? Logout »</UserLink>
          <UserLink>My Account »</UserLink>
        </UserBox>
      </SiteHeader>

      <BlueBar>
        <SearchInput>Search</SearchInput>
        <SearchBtn>
          <FiSearch strokeWidth={3} />
        </SearchBtn>
        <WorkspaceLink>
          WORKSPACE: HOME
          <SmallCaret />
        </WorkspaceLink>
      </BlueBar>

      {/* Body */}
      <Main>
        <Description>Protein sequence-based comparison using bi-directional BLASTP.</Description>
        <Panel>
          <PanelHead>
            Parameters
            <InfoIcon />
          </PanelHead>

          <FieldLabel>Reference Genome</FieldLabel>
          <FieldRow $mb={9}>
            <Combo $h={25}>
              <ComboValue>
                <FilterIcon />
                Brucella melitensis bv. 1 str. 16M
              </ComboValue>
              <ComboArrow />
            </Combo>
          </FieldRow>

          <FieldLabel>Add Up To 8 Genomes to Compare (use plus button to add)</FieldLabel>
          <FieldRow>
            <Combo $h={25}>
              <ComboValue>
                <FilterIcon />
                Brucella melitensis M5-90
              </ComboValue>
              <ComboArrow />
            </Combo>
            <FaPlusCircle size={18} color="#333" />
          </FieldRow>

          <GenomeList>
            {genomes.map((g, i) => (
              <GenomeRow key={g} $odd={i % 2 === 1}>
                <GenomeName>{g}</GenomeName>
                <RemoveIcon />
              </GenomeRow>
            ))}
          </GenomeList>

          <FieldLabel $mb={3}>Optional External Genome (Protein Fasta file)</FieldLabel>
          <FieldRow>
            <Combo>
              <ComboValue>
                <Placeholder>Optional</Placeholder>
              </ComboValue>
              <ComboArrow />
            </Combo>
            <FaFolderOpen size={17} color="#333" />
          </FieldRow>

          <AdvancedToggle>
            Advanced
            <FaCaretDown size={14} color="#333" />
          </AdvancedToggle>

          <CapsLabel>OUTPUT FOLDER</CapsLabel>
          <FieldRow $mb={13}>
            <Combo>
              <ComboValue>Proteome Comparison</ComboValue>
              <ComboArrow />
            </Combo>
            <FaFolderOpen size={17} color="#333" />
          </FieldRow>

          <CapsLabel>OUTPUT NAME</CapsLabel>
          <TextBox>B_melitensis_comparison_16M_reference</TextBox>
        </Panel>

        <Message>
          Genome Comparison should be finished shortly.
          <br />
          Check workspace for results.
        </Message>
      </Main>

      {/* Footer */}
      <Footer>
        <StatusPill $pl={5}>
          <svg viewBox="0 0 24 24" width="24" height="24">
            <path d="M12 1l7 8h-4v6H9V9H5z" fill="#eee" />
            <path d="M1 17h22v6H1z" fill="#eee" />
            <path d="M17 20h1M20 20h1" stroke="#333" strokeWidth="1.5" />
          </svg>
          Uploads
          <Counts>
            <Count $color="#1a1ae0">0</Count>
            <Count $color="#555">·</Count>
            <Count $color="#128012">0</Count>
          </Counts>
        </StatusPill>
        <StatusPill $pl={6}>
          Jobs
          <Counts>
            <Count $color="#1a1ae0">43</Count>
            <Count $color="#555">·</Count>
            <Count $color="#128012">0</Count>
            <Count $color="#555">·</Count>
            <Count $color="#f0a020">0</Count>
            <Count $color="#555">·</Count>
            <Count $color="#e01a1a">7</Count>
          </Counts>
        </StatusPill>
      </Footer>

      {/* Download shelf */}
      <DownloadBar>
        {[0, 1, 2, 3, 4, 5, 6].map((i) => (
          <DownloadItem key={i}>
            <FileIcon viewBox="0 0 16 20">
              <path d="M2.5 1.5h7l4 4v13h-11z" fill="#fafafa" stroke="#999" />
              <path d="M2.5 1.5h6v3h-6z" fill="#3aa84a" />
            </FileIcon>
            <DownloadName>groups (10).xls</DownloadName>
            <DownloadCaret>▼</DownloadCaret>
          </DownloadItem>
        ))}
        <ShowAll>
          <svg viewBox="0 0 12 14" width="12" height="14">
            <path d="M3.5 0h5v7H12L6 14 0 7h3.5z" fill="#555" />
          </svg>
          Show All
        </ShowAll>
        <ShelfClose>×</ShelfClose>
      </DownloadBar>

      {/* Desktop behind the dock */}
      <DesktopStrip>
        <SheetPiece $w={43} $pl={8}>
          <SheetCell $bg="#a9a9a9" $mono>51</SheetCell>
          <SheetCell $bg="#a9a9a9" $mono>52</SheetCell>
          <SheetFoot $bg="#c4c4c4">
            <svg viewBox="0 0 28 18" width="28" height="18">
              <rect x="3" y="3" width="22" height="15" fill="#a8b6c4" stroke="#7f8f9f" />
              <path d="M3 8h22M3 13h22M10 3v15M17 3v15" stroke="#7f8f9f" />
            </svg>
          </SheetFoot>
        </SheetPiece>
        <SheetPiece $w={40}>
          <SheetCell $bg="#dedede" $justify="flex-end">2</SheetCell>
          <SheetCell $bg="#dedede" $justify="flex-end">2</SheetCell>
          <SheetFoot $bg="#8f9eb0" />
        </SheetPiece>
      </DesktopStrip>

      <Dock>
        {dockIcons.map((d, i) => (
          <DockSlot key={i} $running={d.running}>
            {d.art}
            {d.badge && <Badge>{d.badge}</Badge>}
          </DockSlot>
        ))}
        <DockSep />
        {dockExtras.map((art, i) => (
          <DockSlot key={i}>{art}</DockSlot>
        ))}
      </Dock>
    </Screen>
  );
}
